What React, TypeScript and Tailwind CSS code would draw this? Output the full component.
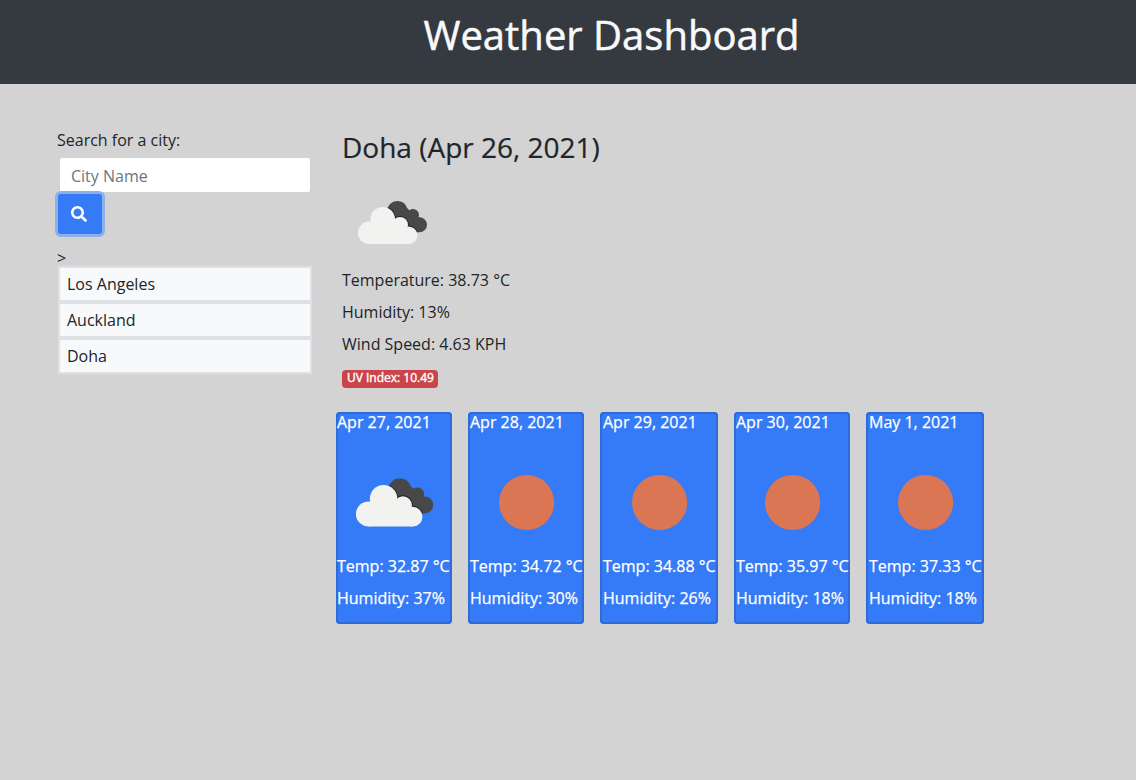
import React from 'react';
import { FaSearch } from 'react-icons/fa';

type Day = { date: string; icon: 'clouds' | 'sun'; temp: string; humidity: string; width: string };

const cities = ['Los Angeles', 'Auckland', 'Doha'];

const forecast: Day[] = [
  { date: 'Apr 27, 2021', icon: 'clouds', temp: '32.87', humidity: '37', width: 'w-[116px] mr-4 pl-px' },
  { date: 'Apr 28, 2021', icon: 'sun', temp: '34.72', humidity: '30', width: 'w-[116px] mr-4 pl-[2px]' },
  { date: 'Apr 29, 2021', icon: 'sun', temp: '34.88', humidity: '26', width: 'w-[118px] mr-4 pl-[3px]' },
  { date: 'Apr 30, 2021', icon: 'sun', temp: '35.97', humidity: '18', width: 'w-[116px] mr-4 pl-[2px]' },
  { date: 'May 1, 2021', icon: 'sun', temp: '37.33', humidity: '18', width: 'w-[118px] pl-[3px]' },
];

function Clouds({ className, id }: { className: string; id: string }) {
  return (
    <svg viewBox="0 0 100 100" className={className}>
      <defs>
        <clipPath id={id}>
          <circle cx="55.3" cy="38.3" r="10.3" />
          <circle cx="71" cy="42.1" r="6" />
          <circle cx="77.5" cy="51.8" r="7.5" />
          <path d="M50 42 L62 32 L72 42 L80 52 L77 59.3 H60 Z" />
        </clipPath>
      </defs>
      <g clipPath={`url(#${id})`}>
        <rect width="100" height="100" fill="#484849" />
        <g fill="#202021">
          <circle cx="40.7" cy="46.3" r="13.1" />
          <circle cx="58" cy="52" r="8.9" />
          <circle cx="66.6" cy="62.2" r="9.6" />
        </g>
      </g>
      <g fill="#f2f2f1">
        <circle cx="40.7" cy="46.3" r="12.3" />
        <circle cx="58" cy="52" r="8" />
        <circle cx="27.2" cy="59.8" r="11.2" />
        <circle cx="66.6" cy="62.2" r="8.8" />
        <path d="M27 71 L66.6 71 V58 L55 50 L35 48 Z" />
      </g>
    </svg>
  );
}

function Sun({ className }: { className: string }) {
  return (
    <svg viewBox="0 0 112 112" className={className}>
      <circle cx="55.6" cy="55.5" r="27.6" fill="#db7654" />
    </svg>
  );
}

export default function App() {
  return (
    <div className="h-[780px] w-full overflow-hidden bg-[#d3d3d3] font-['Open_Sans','Noto_Sans',sans-serif] text-base leading-6 text-[#212529]">
      <header className="flex h-[84px] justify-center bg-[#343a40] pt-[11px] pl-[87px]">
        <h1 className="text-[40px] leading-[48px] text-[#f8f9fa] [-webkit-text-stroke:0.5px]">Weather Dashboard</h1>
      </header>
      <main className="flex pt-11">
        <aside className="w-[336px] shrink-0 pl-[57px]">
          <label htmlFor="city" className="block">Search for a city:</label>
          <input
            id="city"
            placeholder="City Name"
            className="mt-[6px] ml-[3px] block h-[34px] w-[250px] rounded-[2px] bg-white px-[11px] pt-[2px] placeholder:text-[#6c757d]"
          />
          <button
            aria-label="Search"
            className="relative mt-[2px] ml-px flex h-10 w-11 items-center rounded-[3px] bg-[#357af6] pl-[13px] text-white shadow-[0_0_0_3px_#8cb0ea]"
          >
            <FaSearch size={16} />
          </button>
          <div className="mt-3 h-5">&gt;</div>
          <ul className="ml-px w-[254px]">
            {cities.map((city) => (
              <li key={city} className="flex h-9 items-center border-2 border-[#dee1e6] bg-[#f8f9fa] pl-[7px]">
                {city}
              </li>
            ))}
          </ul>
        </aside>
        <section>
          <div className="pl-[6px]">
            <h2 className="pt-[2px] pb-px text-[28px] leading-[34px] [-webkit-text-stroke:0.2px]">Doha (Apr 26, 2021)</h2>
            <Clouds id="today" className="mt-2 h-[100px] w-[100px]" />
            <p className="mt-[-5px]">Temperature: 38.73 °C</p>
            <p className="mt-2">Humidity: 13%</p>
            <p className="mt-2">Wind Speed: 4.63 KPH</p>
            <span className="mt-[14px] block h-[18px] w-24 rounded-[4px] bg-[#cb444a] pl-[5px] text-xs leading-4 text-white [-webkit-text-stroke:0.4px]">
              UV Index: 10.49
            </span>
          </div>
          <div className="mt-6 flex text-white [-webkit-text-stroke:0.25px]">
            {forecast.map((day) => (
              <article
                key={day.date}
                className={`${day.width} h-[212px] shrink-0 rounded-[4px] bg-[#357af6] whitespace-nowrap shadow-[inset_0_0_0_2px_#2e6bd9]`}
              >
                <p className="-mt-[2px]">{day.date}</p>
                {day.icon === 'clouds' ? (
                  <Clouds id="forecast-clouds" className="mt-[13px] ml-px h-28 w-28" />
                ) : (
                  <Sun className="mt-[13px] ml-px h-28 w-28" />
                )}
                <p className="-mt-[5px]">Temp: {day.temp} °C</p>
                <p className="mt-2">Humidity: {day.humidity}%</p>
              </article>
            ))}
          </div>
        </section>
      </main>
    </div>
  );
}
